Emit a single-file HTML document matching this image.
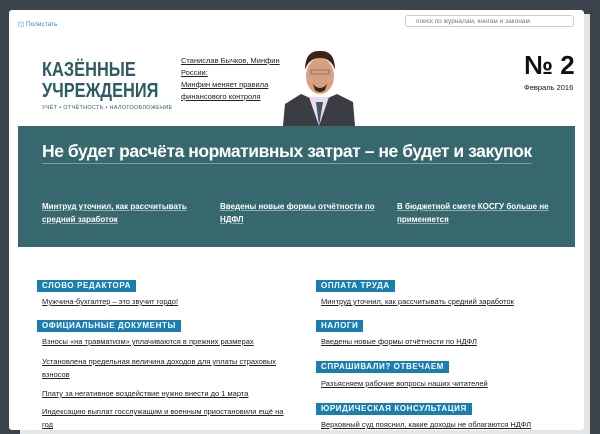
<html><head><style>
body{margin:0;width:600px;height:427px;background:#3b444c;position:relative;overflow:hidden;font-family:"Liberation Sans",sans-serif}
.a{position:absolute}
.pg2{left:20px;top:14px;width:570px;height:420px;background:#e4e6e8}
.pg{left:9px;top:10px;width:575px;height:420px;background:#fff;border-radius:3px}
.lnk{color:#222;font-size:7.5px;text-decoration:underline;line-height:13px}
.h{background:#1a7fb0;color:#fff;font-weight:bold;font-size:8px;letter-spacing:.6px;height:12px;line-height:12px;padding:0 5px}
.bl{color:#fff;font-size:8px;font-weight:bold;line-height:13px;text-decoration:underline;text-decoration-color:#8fb0b3}
</style></head><body>
<div class="a pg2"></div>
<div class="a pg"></div>
<div class="a" style="left:18px;top:20px;font-size:6.5px;color:#3a7fc0">&#9707; Полистать</div>
<div class="a" style="left:405px;top:15px;width:169px;height:12px;border:1px solid #ccc;border-radius:3px;font-size:6.5px;color:#777;line-height:12px;padding-left:10px;box-sizing:border-box">поиск по журналам, книгам и законам</div>
<div class="a" style="left:42px;top:59px;font-size:20.5px;font-weight:bold;color:#2c5d63;line-height:21px;transform:scaleX(0.8);transform-origin:left">КАЗЁННЫЕ<br>УЧРЕЖДЕНИЯ</div>
<div class="a" style="left:42px;top:105px;font-size:5.5px;color:#2c5d63;letter-spacing:.3px">УЧЁТ • ОТЧЁТНОСТЬ • НАЛОГООБЛОЖЕНИЕ</div>
<div class="a lnk" style="left:181px;top:55px;width:110px;font-size:7.5px;line-height:12px">Станислав Бычков, Минфин России:<br>Минфин меняет правила финансового контроля</div>
<svg class="a" style="left:283px;top:42px" width="72" height="84"><rect x="0" y="0" width="72" height="84" fill="#fff"/><path d="M0 84 L2 62 L18 52 L36 60 L54 52 L70 60 L72 84Z" fill="#3c3c44"/><path d="M26 55 L36 84 L46 55Z" fill="#e8dce8"/><path d="M33 60 L36 84 L40 60Z" fill="#41556e"/><ellipse cx="37" cy="34" rx="14" ry="18" fill="#d9a080"/><path d="M22 28 Q22 8 37 9 Q52 8 52 28 Q48 16 37 16 Q26 16 22 28Z" fill="#3a2618"/><rect x="28" y="28" width="18" height="4" fill="none" stroke="#777" stroke-width="1"/><path d="M30 42 Q37 50 44 42 L42 48 Q37 52 32 48Z" fill="#3a2618"/></svg>
<div class="a" style="left:524px;top:50px;font-size:26px;font-weight:bold;color:#111">№ 2</div>
<div class="a" style="left:524px;top:83px;font-size:7.5px;color:#111">Февраль 2016</div>
<div class="a" style="left:18px;top:126px;width:557px;height:121px;background:#37686d"></div>
<div class="a" style="left:42px;top:141px;font-size:17.5px;font-weight:bold;color:#fff;border-bottom:1px solid #7a9ea1;padding-bottom:1px;letter-spacing:-.45px">Не будет расчёта нормативных затрат – не будет и закупок</div>
<div class="a bl" style="left:42px;top:200px;width:150px">Минтруд уточнил, как рассчитывать средний заработок</div>
<div class="a bl" style="left:220px;top:200px;width:155px">Введены новые формы отчётности по НДФЛ</div>
<div class="a bl" style="left:397px;top:200px;width:155px">В бюджетной смете КОСГУ больше не применяется</div>
<div class="a h" style="left:37px;top:280px">СЛОВО РЕДАКТОРА</div>
<div class="a lnk" style="left:42px;top:295px">Мужчина-бухгалтер – это звучит гордо!</div>
<div class="a h" style="left:37px;top:320px">ОФИЦИАЛЬНЫЕ ДОКУМЕНТЫ</div>
<div class="a lnk" style="left:42px;top:335px">Взносы «на травматизм» уплачиваются в прежних размерах</div>
<div class="a lnk" style="left:42px;top:355px;width:240px">Установлена предельная величина доходов для уплаты страховых взносов</div>
<div class="a lnk" style="left:42px;top:387px">Плату за негативное воздействие нужно внести до 1 марта</div>
<div class="a lnk" style="left:42px;top:405px;width:245px">Индексацию выплат госслужащим и военным приостановили ещё на год</div>
<div class="a h" style="left:316px;top:280px">ОПЛАТА ТРУДА</div>
<div class="a lnk" style="left:321px;top:295px">Минтруд уточнил, как рассчитывать средний заработок</div>
<div class="a h" style="left:316px;top:320px">НАЛОГИ</div>
<div class="a lnk" style="left:321px;top:335px">Введены новые формы отчётности по НДФЛ</div>
<div class="a h" style="left:316px;top:361px">СПРАШИВАЛИ? ОТВЕЧАЕМ</div>
<div class="a lnk" style="left:321px;top:377px">Разъясняем рабочие вопросы наших читателей</div>
<div class="a h" style="left:316px;top:403px">ЮРИДИЧЕСКАЯ КОНСУЛЬТАЦИЯ</div>
<div class="a lnk" style="left:321px;top:418px">Верховный суд пояснил, какие доходы не облагаются НДФЛ</div>
</body></html>
